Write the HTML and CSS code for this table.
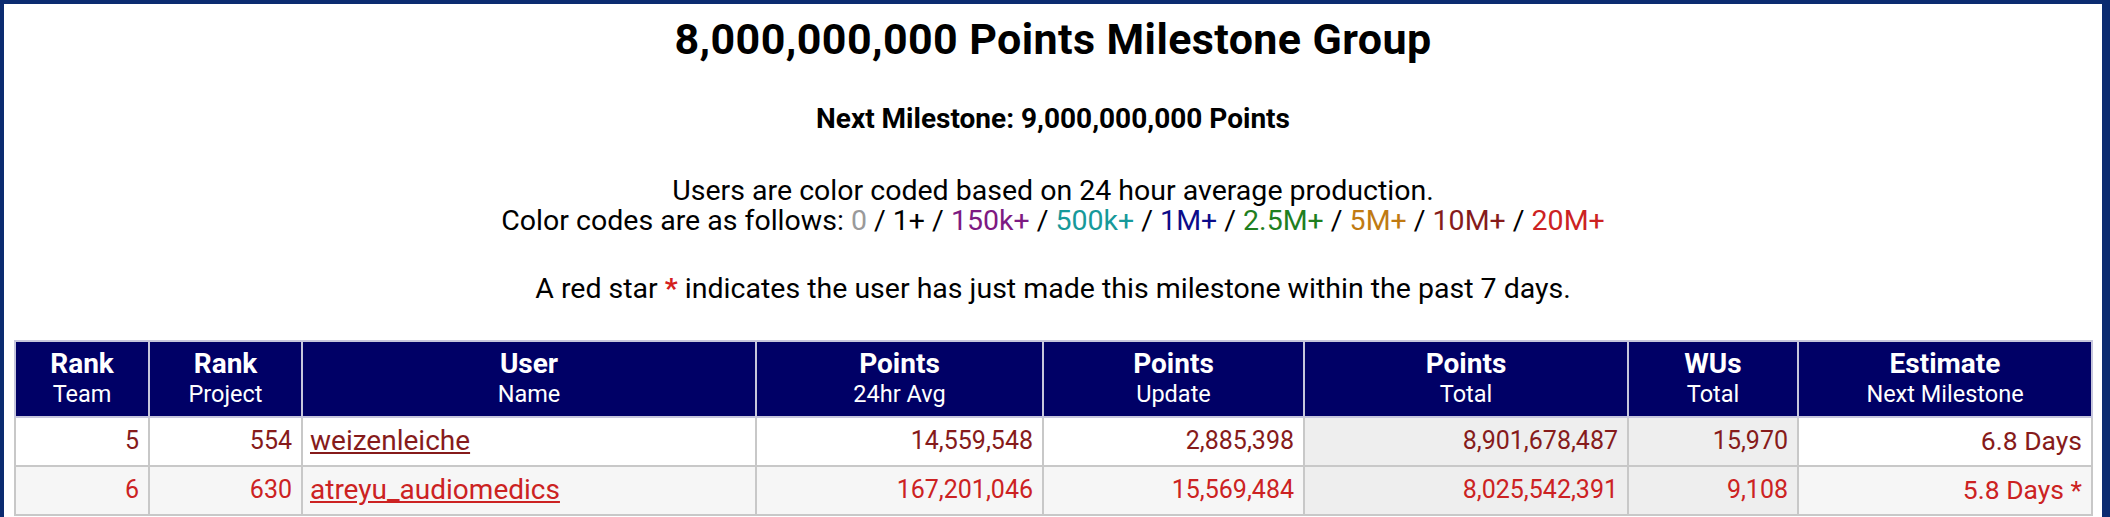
FILE: index.html
```html
<!DOCTYPE html>
<html lang="en">
<head>
<meta charset="utf-8">
<title>8,000,000,000 Points Milestone Group</title>
<link rel="stylesheet" href="styles.css">
</head>
<body>
<div class="frame">
  <h1 class="title">8,000,000,000 Points Milestone Group</h1>
  <h2 class="next">Next Milestone: 9,000,000,000 Points</h2>
  <p class="info">Users are color coded based on 24 hour average production.<br>Color codes are as follows: <span class="c0">0</span> / <span class="c1">1+</span> / <span class="c150k">150k+</span> / <span class="c500k">500k+</span> / <span class="c1m">1M+</span> / <span class="c25m">2.5M+</span> / <span class="c5m">5M+</span> / <span class="c10m">10M+</span> / <span class="c20m">20M+</span></p>
  <p class="info star-note">A red star <span class="star">*</span> indicates the user has just made this milestone within the past 7 days.</p>
  <table class="ms">
    <thead>
      <tr>
        <th class="w-team">Rank<span class="sub">Team</span></th>
        <th class="w-proj">Rank<span class="sub">Project</span></th>
        <th class="w-user">User<span class="sub">Name</span></th>
        <th class="w-avg">Points<span class="sub">24hr Avg</span></th>
        <th class="w-upd">Points<span class="sub">Update</span></th>
        <th class="w-tot">Points<span class="sub">Total</span></th>
        <th class="w-wus">WUs<span class="sub">Total</span></th>
        <th class="w-est">Estimate<span class="sub">Next Milestone</span></th>
      </tr>
    </thead>
    <tbody>
      <tr class="r-odd c10m">
        <td class="num">5</td>
        <td class="num">554</td>
        <td class="name"><a href="#">weizenleiche</a></td>
        <td class="num">14,559,548</td>
        <td class="num">2,885,398</td>
        <td class="num shade">8,901,678,487</td>
        <td class="num shade">15,970</td>
        <td class="num est">6.8 Days</td>
      </tr>
      <tr class="r-even c20m">
        <td class="num">6</td>
        <td class="num">630</td>
        <td class="name"><a href="#">atreyu_audiomedics</a></td>
        <td class="num">167,201,046</td>
        <td class="num">15,569,484</td>
        <td class="num shade">8,025,542,391</td>
        <td class="num shade">9,108</td>
        <td class="num est">5.8 Days *</td>
      </tr>
    </tbody>
  </table>
</div>
</body>
</html>
```

FILE: styles.css
```css
html, body {
  margin: 0;
  padding: 0;
  background: #ffffff;
}
body {
  font-family: Roboto, "Liberation Sans", Arial, sans-serif;
  color: #000;
  font-size: 28.5px;
}
.frame {
  border-style: solid;
  border-color: #0b2b70;
  border-width: 4px 8px 4px 4px;
  min-height: 540px;
  padding: 0 10px;
  text-align: center;
}
.title {
  font-size: 43px;
  letter-spacing: 0.4px;
  font-weight: 700;
  margin: 0;
  padding-top: 13px;
  line-height: 45px;
}
.next {
  font-size: 28px;
  font-weight: 700;
  margin: 42px 0 0;
  line-height: 30px;
}
.info {
  margin: 42px 0 0;
  line-height: 30px;
  font-size: 28.5px;
}
.star-note {
  margin-top: 38px;
}
.star {
  color: #d42020;
  font-weight: 700;
}
.c0 { color: #9a9a9a; }
.c1 { color: #000000; }
.c150k { color: #7d1a82; }
.c500k { color: #17999a; }
.c1m { color: #0c0c8a; }
.c25m { color: #1f7f1f; }
.c5m { color: #c07a12; }
.c10m { color: #861b1b; }
.c20m { color: #cc2222; }

.ms {
  margin: 36px auto 0;
  width: 2077px;
  table-layout: fixed;
  border-collapse: collapse;
  border: 2px solid #c9c9d6;
}
.ms th {
  box-sizing: border-box;
  background: #000066;
  color: #ffffff;
  font-weight: 700;
  font-size: 28px;
  line-height: 30px;
  padding: 7px 4px 6px;
  border: 2px solid #c6c6dc;
  text-align: center;
}
.ms th .sub {
  display: block;
  font-weight: 400;
  font-size: 23.5px;
  line-height: 31px;
}
.w-team { width: 134px; }
.w-proj { width: 153px; }
.w-user { width: 454px; }
.w-avg { width: 287px; }
.w-upd { width: 261px; }
.w-tot { width: 324px; }
.w-wus { width: 170px; }
.w-est { width: 294px; }

.ms td {
  box-sizing: border-box;
  border: 2px solid #c8c8c8;
  padding: 8px 9px 9px;
  line-height: 30px;
  font-size: 25px;
  white-space: nowrap;
}
.ms td.num { text-align: right; }
.ms td.est { font-size: 26.5px; }
.ms td.name { text-align: left; padding-left: 7px; font-size: 28px; }
.ms td a { color: inherit; text-decoration: underline; }
.r-odd td { background: #ffffff; }
.r-even td { background: #f6f6f6; }
.ms td.shade { background: #eeeeee; }
```
